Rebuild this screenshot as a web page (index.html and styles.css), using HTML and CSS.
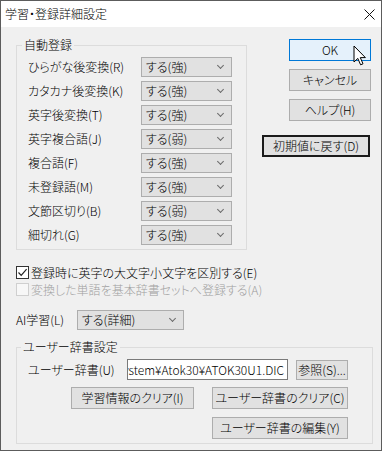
FILE: index.html
```html
<!DOCTYPE html>
<html lang="ja">
<head>
    <meta charset="UTF-8">
    <title>学習・登録詳細設定</title>
    <link rel="stylesheet" href="styles.css">
</head>
<body>
    <div class="window">
        <div class="titlebar">
            <span class="title">学習・登録詳細設定</span>
            <svg class="close" width="11" height="11" viewBox="0 0 11 11">
                <path d="M0.5 0.5 L10.5 10.5 M10.5 0.5 L0.5 10.5" stroke="#111" stroke-width="1" fill="none"/>
            </svg>
        </div>

        <div class="content">
            <div class="top">
                <fieldset class="group auto">
                    <legend>自動登録</legend>
                    <div class="rows">
                        <div class="row"><span class="label">ひらがな後変換(R)</span><div class="combo">する(強)</div></div>
                        <div class="row"><span class="label">カタカナ後変換(K)</span><div class="combo">する(強)</div></div>
                        <div class="row"><span class="label">英字後変換(T)</span><div class="combo">する(強)</div></div>
                        <div class="row"><span class="label">英字複合語(J)</span><div class="combo">する(弱)</div></div>
                        <div class="row"><span class="label">複合語(F)</span><div class="combo">する(強)</div></div>
                        <div class="row"><span class="label">未登録語(M)</span><div class="combo">する(強)</div></div>
                        <div class="row"><span class="label">文節区切り(B)</span><div class="combo">する(弱)</div></div>
                        <div class="row"><span class="label">細切れ(G)</span><div class="combo">する(強)</div></div>
                    </div>
                </fieldset>

                <div class="actions">
                    <button class="btn default">OK</button>
                    <button class="btn">キャンセル</button>
                    <button class="btn">ヘルプ(H)</button>
                    <button class="btn focused">初期値に戻す(D)</button>
                </div>
            </div>

            <div class="check first">
                <span class="box checked">
                    <svg width="11" height="11" viewBox="0 0 11 11"><path d="M1.5 5.5 L4.2 8.3 L9.6 2.2" stroke="#222" stroke-width="1.2" fill="none"/></svg>
                </span>
                <span>登録時に英字の大文字小文字を区別する(E)</span>
            </div>
            <div class="check disabled">
                <span class="box"></span>
                <span>変換した単語を基本辞書セットへ登録する(A)</span>
            </div>

            <div class="ai-row">
                <span class="ai-label">AI学習(L)</span>
                <div class="combo wide">する(詳細)</div>
            </div>

            <fieldset class="group dict">
                <legend>ユーザー辞書設定</legend>
                <div class="dict-row">
                    <span class="dict-label">ユーザー辞書(U)</span>
                    <div class="path"><span>ystem¥Atok30¥ATOK30U1.DIC</span></div>
                    <button class="btn browse">参照(S)...</button>
                </div>
                <div class="dict-buttons">
                    <button class="btn clear-learn">学習情報のクリア(I)</button>
                    <button class="btn clear-dict">ユーザー辞書のクリア(C)</button>
                </div>
                <div class="dict-buttons last">
                    <button class="btn clear-dict">ユーザー辞書の編集(Y)</button>
                </div>
            </fieldset>
        </div>

        <svg class="cursor" width="14" height="22" viewBox="0 0 14 22">
            <path d="M1 1 L1 17 L4.8 13.4 L7.6 19.8 L10 18.8 L7.3 12.6 L12.4 12.6 Z" fill="#fff" stroke="#000" stroke-width="1" stroke-linejoin="miter"/>
        </svg>
    </div>
</body>
</html>
```

FILE: styles.css
```css
* {
    margin: 0;
    padding: 0;
    box-sizing: border-box;
}

body {
    background-color: #fff;
    font-family: "Noto Sans CJK JP", "Noto Sans", sans-serif;
    font-size: 12px;
    font-weight: 300;
    font-feature-settings: "palt";
    line-height: 16px;
    color: #000;
}

.window {
    position: relative;
    width: 382px;
    height: 451px;
    border: 1px solid #5c5c5c;
    background-color: #f0f0f0;
}

.titlebar {
    height: 26px;
    background-color: #fff;
    display: flex;
    align-items: center;
    justify-content: space-between;
    padding: 0 6px 0 4px;
}

.content {
    padding: 0 10px 0 15px;
}

.top {
    display: flex;
    justify-content: space-between;
    align-items: flex-start;
}

/* group boxes */
.group {
    border: 1px solid #dcdcdc;
}

.group legend {
    padding: 0 2px;
    line-height: 16px;
}

.auto {
    width: 231px;
    margin-top: 10px;
    padding: 4px 14px 4px 5px;
}

.rows {
    display: flex;
    flex-direction: column;
    gap: 4px;
    padding-left: 6px;
}

.row {
    display: flex;
    align-items: center;
    height: 20px;
}

.label {
    width: 113px;
}

.combo {
    position: relative;
    width: 91px;
    height: 20px;
    line-height: 18px;
    padding-left: 4px;
    background-color: #e1e1e1;
    border: 1px solid #adadad;
}

.combo::after {
    content: "";
    position: absolute;
    right: 8px;
    top: 5px;
    width: 4px;
    height: 4px;
    border-right: 1px solid #6a6a6a;
    border-bottom: 1px solid #6a6a6a;
    transform: rotate(45deg);
}

.combo.wide {
    width: 107px;
}

/* buttons */
.actions {
    display: flex;
    flex-direction: column;
    align-items: flex-end;
    gap: 8px;
    margin-top: 12px;
}

.btn {
    width: 82px;
    height: 22px;
    font-family: inherit;
    font-size: 12px;
    font-weight: 300;
    font-feature-settings: "palt";
    line-height: 16px;
    white-space: nowrap;
    color: #000;
    background-color: #e1e1e1;
    border: 1px solid #adadad;
}

.btn.default {
    background-color: #e5f1fb;
    border-color: #0078d7;
}

.btn.focused {
    width: 108px;
    margin-top: 6px;
    margin-right: 1px;
    border: 2px solid #1b1b1b;
}

/* checkboxes */
.check {
    display: flex;
    align-items: center;
    gap: 2px;
    height: 17px;
}

.check.first {
    margin-top: 14px;
}

.box {
    display: flex;
    align-items: center;
    justify-content: center;
    width: 13px;
    height: 13px;
    background-color: #fff;
    border: 1px solid #333;
}

.check.disabled {
    color: #a0a0a0;
}

.check.disabled .box {
    border-color: #cfcfcf;
    background-color: #f7f7f7;
}

.ai-row {
    display: flex;
    align-items: center;
    margin-top: 12px;
    height: 20px;
}

.ai-label {
    width: 61px;
}

/* user dictionary */
.dict {
    width: 357px;
    margin-top: 9px;
    padding: 4px 24px 4px 4px;
}

.dict-row {
    display: flex;
    align-items: center;
    padding-left: 7px;
    height: 21px;
}

.dict-label {
    width: 99px;
}

.path {
    display: flex;
    justify-content: flex-end;
    width: 161px;
    height: 21px;
    line-height: 19px;
    padding-right: 3px;
    overflow: hidden;
    white-space: nowrap;
    background-color: #fff;
    border: 1px solid #7a7a7a;
}

.path span {
    flex-shrink: 0;
}

.btn.browse {
    width: 52px;
    height: 20px;
    margin-left: 8px;
}

.dict-buttons {
    display: flex;
    justify-content: flex-end;
    gap: 18px;
    margin-top: 7px;
}

.dict-buttons.last {
    margin-top: 8px;
}

.btn.clear-learn {
    width: 123px;
}

.btn.clear-dict {
    width: 136px;
}

.cursor {
    position: absolute;
    left: 352px;
    top: 44px;
}
```
